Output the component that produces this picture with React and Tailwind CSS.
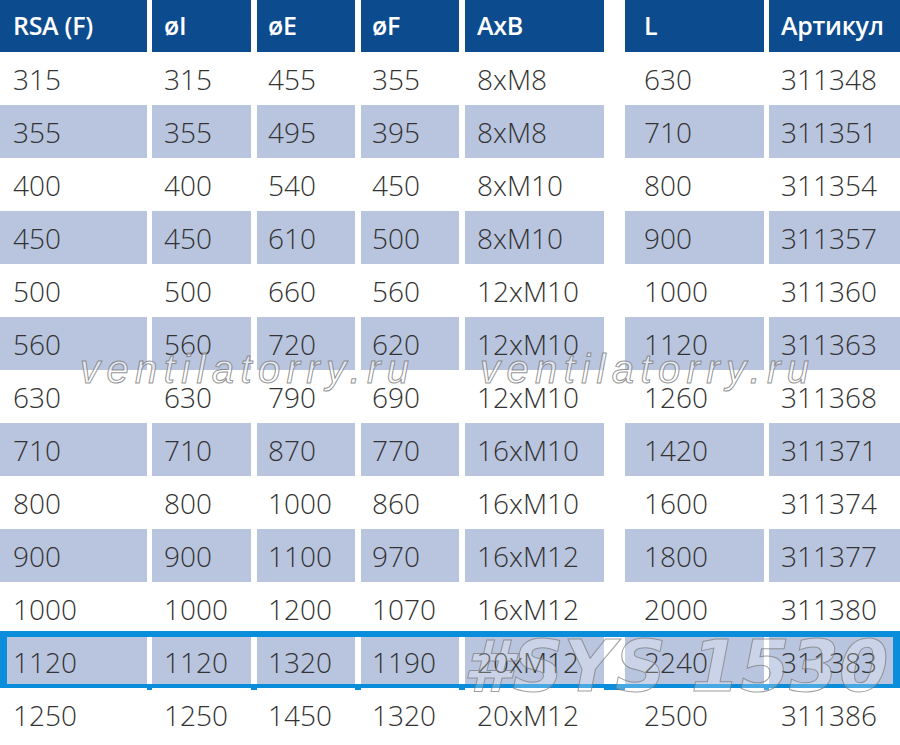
import React from "react";

const cols = [
  { w: "w-[147px]", ml: "ml-0", pl: "pl-[13px]" },
  { w: "w-[99px]", ml: "ml-[5px]", pl: "pl-[12px]" },
  { w: "w-[98px]", ml: "ml-[6px]", pl: "pl-[11px]" },
  { w: "w-[98px]", ml: "ml-[6px]", pl: "pl-[11px]" },
  { w: "w-[139px]", ml: "ml-[6px]", pl: "pl-[12px]" },
  { w: "w-[139px]", ml: "ml-[21px]", pl: "pl-[19px]" },
  { w: "w-[131px]", ml: "ml-[5px]", pl: "pl-[12px]" },
];

const headers = ["RSA (F)", "øI", "øE", "øF", "AxB", "L", "Артикул"];

const rows = [
  ["315", "315", "455", "355", "8xM8", "630", "311348"],
  ["355", "355", "495", "395", "8xM8", "710", "311351"],
  ["400", "400", "540", "450", "8xM10", "800", "311354"],
  ["450", "450", "610", "500", "8xM10", "900", "311357"],
  ["500", "500", "660", "560", "12xM10", "1000", "311360"],
  ["560", "560", "720", "620", "12xM10", "1120", "311363"],
  ["630", "630", "790", "690", "12xM10", "1260", "311368"],
  ["710", "710", "870", "770", "16xM10", "1420", "311371"],
  ["800", "800", "1000", "860", "16xM10", "1600", "311374"],
  ["900", "900", "1100", "970", "16xM12", "1800", "311377"],
  ["1000", "1000", "1200", "1070", "16xM12", "2000", "311380"],
  ["1120", "1120", "1320", "1190", "20xM12", "2240", "311383"],
  ["1250", "1250", "1450", "1320", "20xM12", "2500", "311386"],
];

// watermark text over the table
const Watermark = ({ className }) => (
  <div
    className={`absolute italic text-[40px] leading-none tracking-[6.4px] text-white/60 [-webkit-text-stroke:1px_rgba(120,120,120,0.8)] font-['Liberation_Sans',Arial,sans-serif] pointer-events-none ${className}`}>
    ventilatorry.ru
  </div>
);

export default function App() {
  return (
    <div className="relative w-[900px] h-[745px] bg-white overflow-hidden font-['Open_Sans','Noto_Sans',sans-serif]">
      <div className="flex h-[52px]">
        {headers.map((h, i) => (
          <div
            key={h}
            className={`${cols[i].w} ${cols[i].ml} ${cols[i].pl} bg-[#0b4b8e] text-white text-[25px] font-semibold tracking-[-0.3px] flex items-center`}>
            {h}
          </div>
        ))}
      </div>
      {rows.map((r, ri) => (
        <div key={ri} className="relative flex h-[53px]">
          {r.map((c, ci) => (
            <div
              key={ci}
              className={`${cols[ci].w} ${cols[ci].ml} ${cols[ci].pl} ${
                ri % 2 === 1 ? "bg-[#b9c5df]" : "bg-white"
              } text-[#333] text-[28px] font-light flex items-center`}>
              {c}
            </div>
          ))}
          {ri === 11 && (
            <div className="absolute left-0 right-0 -top-[4px] -bottom-[2px] border-[6px] border-x-[7px] border-[#0a8ddb] pointer-events-none" />
          )}
        </div>
      ))}
      <Watermark className="left-[80px] top-[349px]" />
      <Watermark className="left-[480px] top-[349px]" />
      <div className="absolute left-[463px] top-[631px] italic font-bold text-[71px] leading-none text-white/25 [-webkit-text-stroke:1px_rgba(120,120,120,0.7)] font-['DejaVu_Sans',sans-serif] pointer-events-none">
        #SYS 1530
      </div>
    </div>
  );
}
